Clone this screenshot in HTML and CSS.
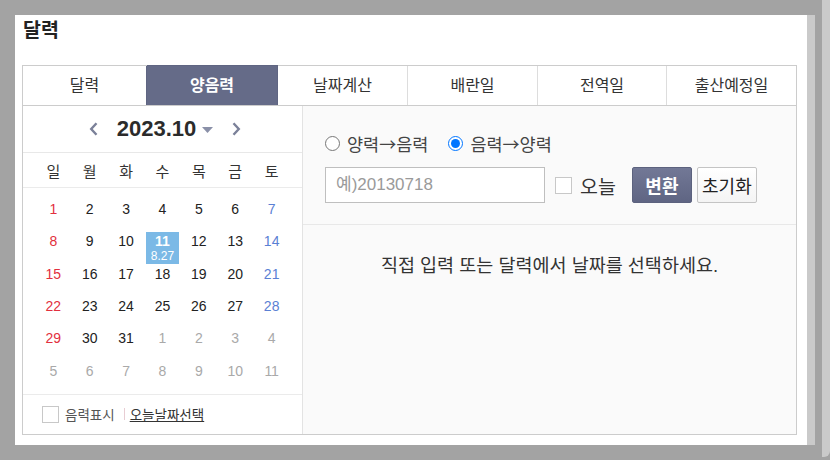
FILE: index.html
```html
<!DOCTYPE html>
<html lang="ko">
<head>
<meta charset="utf-8">
<title>달력</title>
<link rel="stylesheet" href="styles.css">
</head>
<body>
<div class="screen">
  <div class="window">
    <div class="panel">
      <h1 class="title">달력</h1>
      <div class="box">
        <ul class="tabs">
          <li class="tab">달력</li>
          <li class="tab active">양음력</li>
          <li class="tab">날짜계산</li>
          <li class="tab">배란일</li>
          <li class="tab">전역일</li>
          <li class="tab">출산예정일</li>
        </ul>
        <div class="content">
          <section class="cal">
            <div class="cal-head">
              <svg class="arrow prev" width="9" height="14" viewBox="0 0 9 14"><path d="M7.5 1.2 L2.2 7 L7.5 12.8" fill="none" stroke="#7b8199" stroke-width="2.4"/></svg>
              <span class="ym">2023.10</span>
              <svg class="caret" width="11" height="6" viewBox="0 0 11 6"><path d="M0 0 H11 L5.5 6 Z" fill="#8a90a8"/></svg>
              <svg class="arrow next" width="9" height="14" viewBox="0 0 9 14"><path d="M1.5 1.2 L6.8 7 L1.5 12.8" fill="none" stroke="#7b8199" stroke-width="2.4"/></svg>
            </div>
            <div class="weekdays">
              <span>일</span><span>월</span><span>화</span><span>수</span><span>목</span><span>금</span><span>토</span>
            </div>
            <div class="days">
              <div class="day sun"><span class="d">1</span></div>
              <div class="day"><span class="d">2</span></div>
              <div class="day"><span class="d">3</span></div>
              <div class="day"><span class="d">4</span></div>
              <div class="day"><span class="d">5</span></div>
              <div class="day"><span class="d">6</span></div>
              <div class="day sat"><span class="d">7</span></div>

              <div class="day sun"><span class="d">8</span></div>
              <div class="day"><span class="d">9</span></div>
              <div class="day"><span class="d">10</span></div>
              <div class="day sel"><span class="d">11<small class="lunar">8.27</small></span></div>
              <div class="day"><span class="d">12</span></div>
              <div class="day"><span class="d">13</span></div>
              <div class="day sat"><span class="d">14</span></div>

              <div class="day sun"><span class="d">15</span></div>
              <div class="day"><span class="d">16</span></div>
              <div class="day"><span class="d">17</span></div>
              <div class="day"><span class="d">18</span></div>
              <div class="day"><span class="d">19</span></div>
              <div class="day"><span class="d">20</span></div>
              <div class="day sat"><span class="d">21</span></div>

              <div class="day sun"><span class="d">22</span></div>
              <div class="day"><span class="d">23</span></div>
              <div class="day"><span class="d">24</span></div>
              <div class="day"><span class="d">25</span></div>
              <div class="day"><span class="d">26</span></div>
              <div class="day"><span class="d">27</span></div>
              <div class="day sat"><span class="d">28</span></div>

              <div class="day sun"><span class="d">29</span></div>
              <div class="day"><span class="d">30</span></div>
              <div class="day"><span class="d">31</span></div>
              <div class="day other"><span class="d">1</span></div>
              <div class="day other"><span class="d">2</span></div>
              <div class="day other"><span class="d">3</span></div>
              <div class="day other"><span class="d">4</span></div>

              <div class="day other"><span class="d">5</span></div>
              <div class="day other"><span class="d">6</span></div>
              <div class="day other"><span class="d">7</span></div>
              <div class="day other"><span class="d">8</span></div>
              <div class="day other"><span class="d">9</span></div>
              <div class="day other"><span class="d">10</span></div>
              <div class="day other"><span class="d">11</span></div>
            </div>
            <div class="cal-foot">
              <label class="chk-label"><input type="checkbox" class="chk">음력표시</label>
              <span class="sep"></span>
              <a class="today-link">오늘날짜선택</a>
            </div>
          </section>
          <section class="conv">
            <div class="conv-form">
              <div class="radios">
                <label class="radio"><input type="radio" name="mode">양력<span class="arr">→</span>음력</label>
                <label class="radio second"><input type="radio" name="mode" checked>음력<span class="arr">→</span>양력</label>
              </div>
              <div class="inputs">
                <input class="date-input" type="text" placeholder="예)20130718">
                <label class="chk-label big"><input type="checkbox" class="chk">오늘</label>
                <button class="btn primary" type="button">변환</button>
                <button class="btn reset" type="button">초기화</button>
              </div>
            </div>
            <p class="msg">직접 입력 또는 달력에서 날짜를 선택하세요.</p>
          </section>
        </div>
      </div>
    </div>
    <div class="track"></div>
  </div>
  <div class="gap"></div>
  <div class="edge"></div>
</div>
</body>
</html>
```

FILE: styles.css
```css
html, body {
  margin: 0;
  padding: 0;
}

body {
  background: #a3a3a3;
  font-family: "Liberation Sans", "Noto Sans CJK KR", sans-serif;
  color: #333;
}

.screen {
  display: flex;
  width: 830px;
  height: 460px;
  overflow: hidden;
}

.window {
  display: flex;
  margin: 15px 0 0 15px;
  height: 430px;
}

.panel {
  width: 792px;
  background: #fff;
  padding: 0 10px 0 7px;
  box-sizing: border-box;
}

.track {
  width: 8px;
  background: #cacaca;
}

.gap {
  width: 7px;
  flex: none;
}

.edge {
  width: 8px;
  height: 457px;
  background: #cacaca;
  border-bottom-right-radius: 6px;
  flex: none;
}

.title {
  margin: 0;
  padding: 3px 0 0 1px;
  font-size: 19.5px;
  line-height: 24px;
  font-weight: bold;
  color: #222;
}

.box {
  margin-top: 23px;
  width: 775px;
  height: 370px;
  box-sizing: border-box;
  border: 1px solid #cccccc;
}

/* tabs */
.tabs {
  display: grid;
  grid-template-columns: 124px 131px 130px 130px 129px 1fr;
  height: 40px;
  box-sizing: border-box;
  margin: 0;
  padding: 0;
  list-style: none;
  border-bottom: 1px solid #cccccc;
}

.tab {
  box-sizing: border-box;
  border-right: 1px solid #dddddd;
  font-size: 16px;
  line-height: 39px;
  text-align: center;
  color: #333;
}

.tab:last-child {
  border-right: none;
}

.tab.active {
  background: #656b88;
  border-right-color: #5f6582;
  box-shadow: -1px 0 0 #5f6582, 0 -1px 0 #5f6582;
  color: #fff;
  font-weight: bold;
}

.content {
  display: flex;
  height: 328px;
}

/* calendar */
.cal {
  width: 280px;
  flex: none;
  box-sizing: border-box;
  border-right: 1px solid #e3e3e3;
  display: flex;
  flex-direction: column;
  background: #fff;
}

.cal-head {
  height: 46px;
  flex: none;
  border-bottom: 1px solid #e8e8e8;
  display: flex;
  align-items: center;
  justify-content: center;
  padding-left: 5px;
}

.arrow {
  display: block;
  flex: none;
}

.arrow.prev {
  margin-right: 19px;
}

.arrow.next {
  margin-left: 19px;
}

.ym {
  font-size: 22px;
  line-height: 24px;
  font-weight: bold;
  color: #2b2b2b;
}

.caret {
  display: block;
  margin-left: 6px;
  margin-top: 1px;
}

.weekdays {
  height: 34px;
  flex: none;
  border-bottom: 1px solid #ebebeb;
  display: grid;
  grid-template-columns: repeat(7, 36.4px);
  justify-content: center;
  align-items: center;
  text-align: center;
  font-size: 15px;
  color: #333;
}

.days {
  flex: none;
  padding-top: 12px;
  display: grid;
  grid-template-columns: repeat(7, 36.4px);
  grid-template-rows: repeat(6, 32.33px);
  justify-content: center;
  font-size: 14px;
  color: #222;
}

.day .d {
  display: block;
  width: 33px;
  height: 32px;
  margin: 0 auto;
  padding-top: 1px;
  box-sizing: border-box;
  text-align: center;
  line-height: 16px;
}

.day.sun {
  color: #e2303e;
}

.day.sat {
  color: #5a80d4;
}

.day.other {
  color: #a9a9a9;
}

.day.sel .d {
  background: #7bb9e6;
  color: #fff;
  font-weight: bold;
}

.lunar {
  display: block;
  font-size: 12px;
  line-height: 14px;
  font-weight: normal;
}

.cal-foot {
  flex: 1;
  border-top: 1px solid #ebebeb;
  display: flex;
  align-items: center;
  padding-left: 19px;
  font-size: 13.5px;
}

.chk-label {
  display: flex;
  align-items: center;
  color: #555;
}

.chk {
  appearance: none;
  -webkit-appearance: none;
  width: 17px;
  height: 17px;
  margin: 0 6px 0 0;
  box-sizing: border-box;
  border: 1px solid #c8c8c8;
  background: #fff;
}

.sep {
  width: 1px;
  height: 12px;
  background: #e8cdd3;
  margin: 0 5px 0 9px;
}

.today-link {
  color: #333;
  text-decoration: underline;
}

/* converter */
.conv {
  flex: 1;
  background: #fafafa;
}

.conv-form {
  padding: 25px 22px 21px;
  border-bottom: 1px solid #e8e8e8;
}

.radios {
  display: flex;
  align-items: center;
  height: 24px;
  font-size: 17.5px;
  color: #444;
}

.radio {
  display: flex;
  align-items: center;
}

.arr {
  font-family: "Noto Sans CJK KR", sans-serif;
  font-size: 17px;
}

.radio input {
  width: 15px;
  height: 15px;
  margin: 0 7px 0 0;
}

.radio.second {
  margin-left: 20px;
}

.inputs {
  display: flex;
  align-items: center;
  height: 36px;
  margin-top: 12px;
}

.date-input {
  width: 220px;
  height: 36px;
  margin: 0;
  box-sizing: border-box;
  border: 1px solid #bfbfbf;
  border-radius: 0;
  padding: 0 10px;
  background: #fff;
  font-family: "Liberation Sans", "Noto Sans CJK KR", sans-serif;
  font-size: 17px;
  color: #333;
}

.date-input::placeholder {
  color: #9a9a9a;
}

.chk-label.big {
  margin-left: 10px;
  font-size: 19.5px;
  color: #333;
}

.chk-label.big .chk {
  margin-right: 8px;
}

.btn {
  width: 60px;
  height: 36px;
  margin: 0;
  padding: 0;
  box-sizing: border-box;
  font-family: "Liberation Sans", "Noto Sans CJK KR", sans-serif;
  font-size: 18px;
}

.btn.primary {
  margin-left: 16px;
  border: 1px solid #5c627e;
  border-radius: 2px;
  background: linear-gradient(#727896, #5f6583);
  color: #fff;
  font-weight: bold;
}

.btn.reset {
  margin-left: 5px;
  border: 1px solid #c4c4c4;
  border-radius: 2px;
  background: linear-gradient(#ffffff, #f4f4f4);
  color: #222;
}

.msg {
  margin: 0;
  padding-top: 29px;
  line-height: 24px;
  text-align: center;
  font-size: 18.5px;
  color: #333;
}
```
